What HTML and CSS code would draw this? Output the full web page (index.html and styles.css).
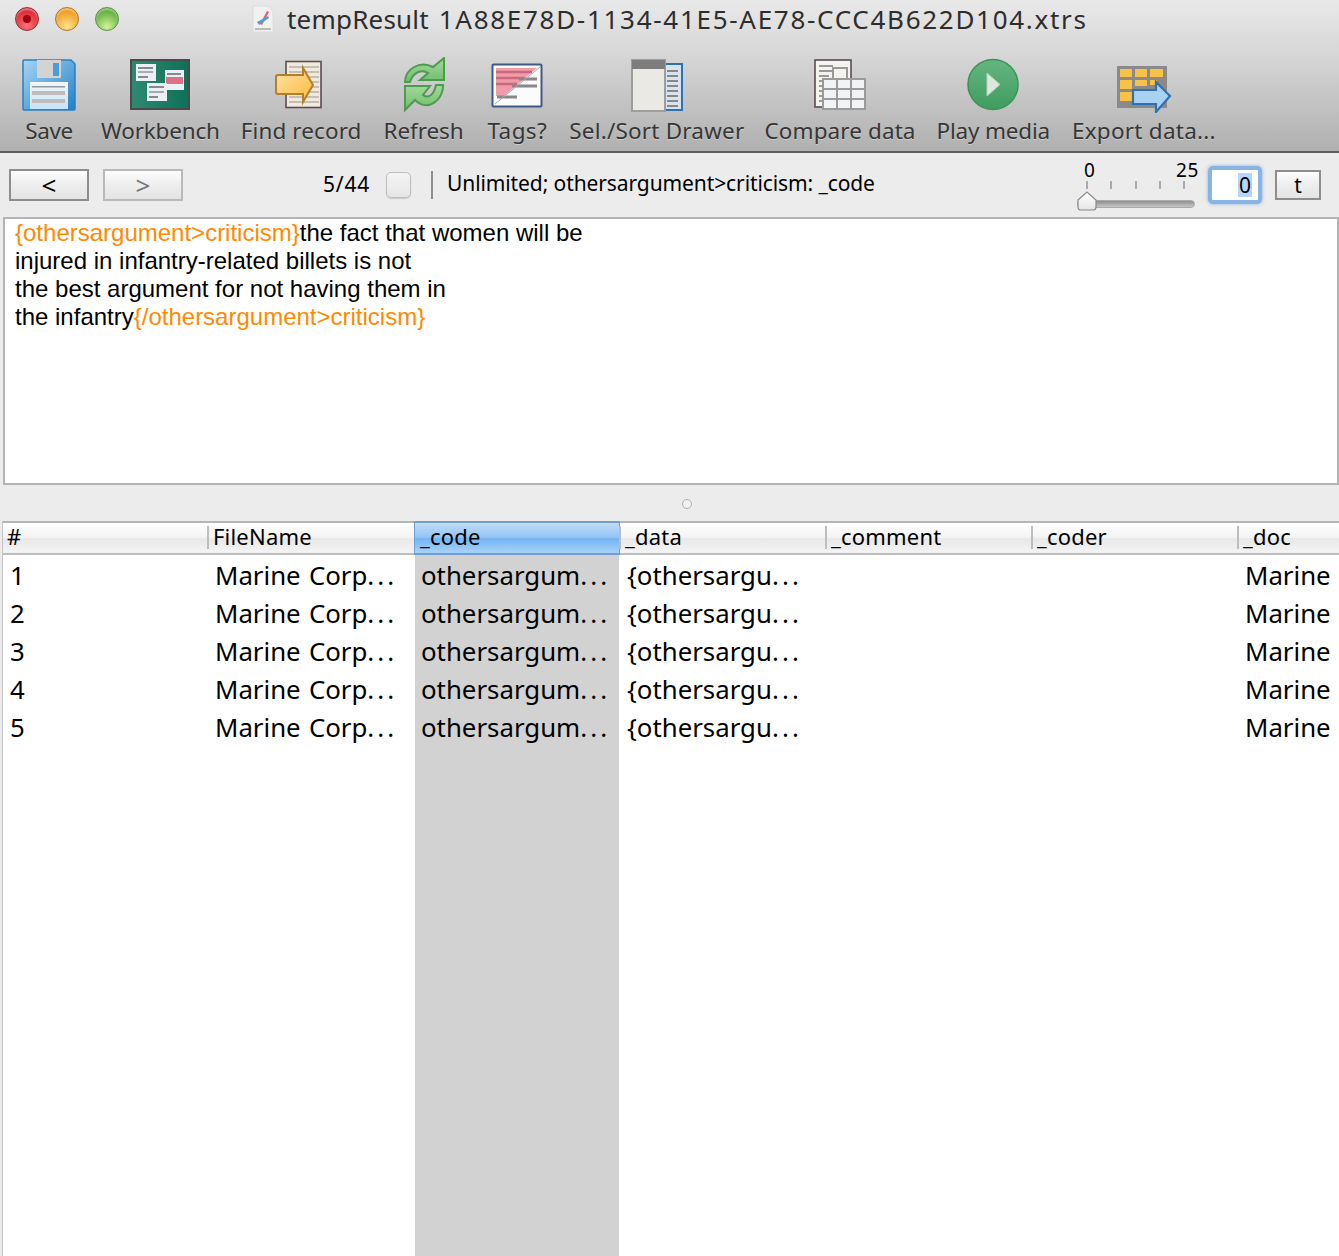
FILE: index.html
```html
<!DOCTYPE html>
<html lang="en">
<head>
<meta charset="utf-8">
<title>tempResult</title>
<link rel="stylesheet" href="styles.css">
</head>
<body>
<div class="window">
  <header class="chrome">
    <div class="titlebar">
      <div class="lights">
        <span class="light red"><i></i></span>
        <span class="light amber"></span>
        <span class="light green"></span>
      </div>
      <div class="title">
        <svg class="doc-icon" viewBox="0 0 22 28" width="22" height="28">
          <path d="M1 1h15l5 5v21H1z" fill="#f1f1f1" stroke="#dcdcdc"/>
          <path d="M8 19 15 6l2 1-7 13z" fill="#e0607a"/>
          <path d="M5 17 16 11l1 2L7 20z" fill="#5a9bd0"/>
          <rect x="3" y="23" width="16" height="2" fill="#bbb"/>
        </svg>
        <span class="title-text">tempResult <span class="title-id">1A88E78D-1134-41E5-AE78-CCC4B622D104.xtrs</span></span>
      </div>
    </div>
    <nav class="toolbar">
      <div class="tool tool-save">
        <svg class="icon" viewBox="0 0 54 56" width="54" height="56">
          <defs>
            <linearGradient id="sv" x1="0" y1="0" x2="1" y2="1"><stop offset="0" stop-color="#a8d4f2"/><stop offset="1" stop-color="#1f80ca"/></linearGradient>
            <linearGradient id="lb" x1="0" y1="0" x2="0" y2="1"><stop offset="0" stop-color="#f2f7fa"/><stop offset="1" stop-color="#c6e2f5"/></linearGradient>
            <linearGradient id="rf" x1="0" y1="0" x2="0" y2="1"><stop offset="0" stop-color="#a5d99d"/><stop offset="1" stop-color="#6fbd6c"/></linearGradient>
            <linearGradient id="ar" x1="0" y1="0" x2="1" y2="1"><stop offset="0" stop-color="#ffe3a6"/><stop offset="1" stop-color="#fbb83f"/></linearGradient>
            <linearGradient id="pl" x1="0" y1="0" x2="0" y2="1"><stop offset="0" stop-color="#66b582"/><stop offset="1" stop-color="#3f9c5f"/></linearGradient>
            <linearGradient id="wb" x1="0" y1="0" x2="1" y2="0"><stop offset="0" stop-color="#2f8a70"/><stop offset="1" stop-color="#0f6f58"/></linearGradient>
          </defs>
          <path d="M2 3h47l4 4v45a1 1 0 0 1-1 1H2a1 1 0 0 1-1-1V4a1 1 0 0 1 1-1z" fill="url(#sv)" stroke="#2b7fbf" stroke-width="1.500"/>
          <rect x="15" y="3" width="24" height="18" fill="#d3d3d3"/>
          <rect x="31" y="6" width="6" height="13" fill="#4a9ed8"/>
          <rect x="8" y="25" width="38" height="27" fill="url(#lb)"/>
          <rect x="10" y="29" width="33" height="1.500" fill="#8f9aa2"/>
          <rect x="10" y="34" width="33" height="4" fill="#bcbcbc"/>
          <rect x="10" y="42" width="33" height="4" fill="#bcbcbc"/>
        </svg>
        <span class="tool-label">Save</span>
      </div>
      <div class="tool tool-wb">
        <svg class="icon" viewBox="0 0 60 56" width="60" height="56">
          <rect x="1" y="3" width="58" height="49" fill="url(#wb)" stroke="#4a4a4a" stroke-width="2"/>
          <rect x="6" y="7" width="20" height="17" fill="#e9f1f6"/>
          <rect x="8" y="10" width="15" height="2" fill="#888"/><rect x="8" y="14" width="15" height="2" fill="#aaa"/><rect x="8" y="19" width="10" height="2" fill="#888"/>
          <rect x="35" y="13" width="19" height="20" fill="#e9f1f6"/>
          <rect x="36" y="20" width="17" height="7" fill="#e0708a"/>
          <rect x="37" y="16" width="14" height="2" fill="#888"/>
          <rect x="17" y="26" width="20" height="18" fill="#e9f1f6"/>
          <rect x="19" y="29" width="15" height="2" fill="#888"/><rect x="19" y="34" width="15" height="2" fill="#aaa"/><rect x="19" y="39" width="9" height="2" fill="#888"/>
        </svg>
        <span class="tool-label">Workbench</span>
      </div>
      <div class="tool tool-find">
        <svg class="icon" viewBox="0 0 52 56" width="52" height="56">
          <rect x="11" y="4.500" width="35" height="46" fill="#efeadd" stroke="#5b4b55" stroke-width="1.600"/>
          <path d="M14 10h30M14 15h30M14 20h30M14 25h30M14 30h30M14 35h30M14 40h30M14 45h30" stroke="#c4c0b6" stroke-width="2"/>
          <path d="M3 18H28V11L38 28 28 45V37H3Q1 37 1 35V20Q1 18 3 18Z" fill="url(#ar)" stroke="#b27f2c" stroke-width="2"/>
        </svg>
        <span class="tool-label">Find record</span>
      </div>
      <div class="tool tool-refresh">
        <svg class="icon" viewBox="0 0 44 56" width="44" height="56">
          <path d="M3 25C3 12 18 3 31 10L42 1V23H18L26 16C20 12 11 15 8 25Z" fill="url(#rf)" stroke="#4b9c4c" stroke-width="2"/>
          <path d="M3 29H28L21 38C26 42 32 38 34 28H41C42 42 26 56 13 43L3 53Z" fill="url(#rf)" stroke="#4b9c4c" stroke-width="2"/>
        </svg>
        <span class="tool-label">Refresh</span>
      </div>
      <div class="tool tool-tags">
        <svg class="icon" viewBox="0 0 52 56" width="52" height="56">
          <rect x="1.500" y="7.500" width="49" height="42" rx="1" fill="#fbfbfb" stroke="#3c5a85" stroke-width="2"/>
          <path d="M5 11h41L13 39H5z" fill="#f19aaa"/>
          <path d="M5 15h36M5 21h28M5 27h21" stroke="#c76a7c" stroke-width="2.500"/>
          <path d="M28 22h18M21 29h25" stroke="#888" stroke-width="3"/>
          <path d="M6 40h20" stroke="#888" stroke-width="3"/>
          <path d="M4 47 49 10" stroke="#aaa" stroke-width="1"/>
        </svg>
        <span class="tool-label">Tags?</span>
      </div>
      <div class="tool tool-sel">
        <svg class="icon" viewBox="0 0 56 56" width="56" height="56">
          <rect x="34" y="7" width="19" height="46" fill="#d7e4ef" stroke="#2f72b4" stroke-width="2"/>
          <path d="M38 14h11M38 19h11M38 24h11M38 29h11M38 34h11M38 39h11M38 44h11M38 49h11" stroke="#888" stroke-width="2"/>
          <rect x="3" y="3" width="33" height="51" fill="#ebe9e3" stroke="#9d9d9d" stroke-width="2"/>
          <rect x="3" y="3" width="33" height="9" fill="#7d7d7d"/>
        </svg>
        <span class="tool-label">Sel./Sort Drawer</span>
      </div>
      <div class="tool tool-compare">
        <svg class="icon" viewBox="0 0 54 56" width="54" height="56">
          <rect x="2" y="3" width="36" height="47" fill="#f5f3ee" stroke="#5b4b55" stroke-width="1.600"/>
          <path d="M6 9h14M6 14h14M6 19h10M6 24h10M6 29h8M6 34h8M6 39h8M6 44h8" stroke="#999" stroke-width="2"/>
          <rect x="20" y="11" width="14" height="14" fill="none" stroke="#999" stroke-width="2"/>
          <rect x="10" y="22" width="42" height="30" fill="#f1f3f4" stroke="#9a9a9a" stroke-width="2"/>
          <path d="M24 22v30M38 22v30M10 32h42M10 42h42" stroke="#9a9a9a" stroke-width="2"/>
        </svg>
        <span class="tool-label">Compare data</span>
      </div>
      <div class="tool tool-play">
        <svg class="icon" viewBox="0 0 52 56" width="52" height="56">
          <circle cx="26" cy="27.500" r="25" fill="url(#pl)" stroke="#3a9457" stroke-width="1.500"/>
          <path d="M20 16 33 27.500 20 39z" fill="#dfe7dd" stroke="#b8d3bc"/>
        </svg>
        <span class="tool-label">Play media</span>
      </div>
      <div class="tool tool-export">
        <svg class="icon" viewBox="0 0 56 56" width="56" height="56">
          <rect x="1" y="9" width="50" height="42" fill="#8a8a8a"/>
          <g fill="#f8c249">
            <rect x="4" y="12" width="12" height="8"/><rect x="19" y="12" width="12" height="8"/><rect x="34" y="12" width="13" height="8"/>
            <rect x="4" y="23" width="12" height="9"/><rect x="19" y="23" width="12" height="6"/><rect x="34" y="23" width="7" height="5"/>
            <rect x="4" y="35" width="12" height="9"/>
          </g>
          <path d="M17 33H40V25L54 39 40 55V47H17Z" fill="#a9d2f2" stroke="#2f72b4" stroke-width="2.200"/>
        </svg>
        <span class="tool-label">Export data...</span>
      </div>
    </nav>
  </header>

  <section class="controls">
    <button class="nav-btn">&lt;</button>
    <button class="nav-btn nav-off">&gt;</button>
    <span class="count">5/44</span>
    <span class="check"></span>
    <span class="sep"></span>
    <span class="status">Unlimited; othersargument&gt;criticism: _code</span>
    <div class="slider">
      <div class="slider-nums"><span>0</span><span>25</span></div>
      <div class="ticks"><i></i><i></i><i></i><i></i><i></i></div>
      <div class="track">
        <svg class="knob" viewBox="0 0 20 20" width="20" height="20">
          <defs><linearGradient id="kn" x1="0" y1="0" x2="0" y2="1"><stop offset="0" stop-color="#ffffff"/><stop offset="1" stop-color="#e4e4e4"/></linearGradient></defs>
          <path d="M1 9 10 1 19 9V16Q19 19 16 19H4Q1 19 1 16Z" fill="url(#kn)" stroke="#8a8a8a" stroke-width="1.200"/>
        </svg>
      </div>
    </div>
    <div class="num-field"><span class="num-sel">0</span></div>
    <button class="t-btn">t</button>
  </section>

  <section class="editor">
    <p><span class="tag">{othersargument&gt;criticism}</span>the fact that women will be</p>
    <p>injured in infantry-related billets is not</p>
    <p>the best argument for not having them in</p>
    <p>the infantry<span class="tag">{/othersargument&gt;criticism}</span></p>
  </section>

  <div class="divider"><span class="grip"></span></div>

  <section class="table">
    <div class="col">
      <div class="th th-first">#</div>
      <div class="cells cells-num"><div>1</div><div>2</div><div>3</div><div>4</div><div>5</div></div>
    </div>
    <div class="col">
      <div class="th">FileName</div>
      <div class="cells">
        <div>Marine Corp<span class="dots">...</span></div><div>Marine Corp<span class="dots">...</span></div><div>Marine Corp<span class="dots">...</span></div><div>Marine Corp<span class="dots">...</span></div><div>Marine Corp<span class="dots">...</span></div>
      </div>
    </div>
    <div class="col col-sel">
      <div class="th th-sel">_code</div>
      <div class="cells">
        <div>othersargum<span class="dots">...</span></div><div>othersargum<span class="dots">...</span></div><div>othersargum<span class="dots">...</span></div><div>othersargum<span class="dots">...</span></div><div>othersargum<span class="dots">...</span></div>
      </div>
    </div>
    <div class="col">
      <div class="th">_data</div>
      <div class="cells">
        <div>{othersargu<span class="dots">...</span></div><div>{othersargu<span class="dots">...</span></div><div>{othersargu<span class="dots">...</span></div><div>{othersargu<span class="dots">...</span></div><div>{othersargu<span class="dots">...</span></div>
      </div>
    </div>
    <div class="col">
      <div class="th">_comment</div>
      <div class="cells"></div>
    </div>
    <div class="col">
      <div class="th">_coder</div>
      <div class="cells"></div>
    </div>
    <div class="col col-last">
      <div class="th">_doc</div>
      <div class="cells"><div>Marine</div><div>Marine</div><div>Marine</div><div>Marine</div><div>Marine</div></div>
    </div>
  </section>
</div>
</body>
</html>
```
FILE: styles.css
```css
* { box-sizing: border-box; }
html, body { margin: 0; padding: 0; background: #ececec; }
body { font-family: "Noto Sans", "DejaVu Sans", sans-serif; color: #000; }
.window { width: 1339px; height: 1256px; overflow: hidden; display: flex; flex-direction: column; }

.chrome { height: 153px; flex: none; background: linear-gradient(#e9e9e9, #d4d4d4 40%, #b0b0b0); border-bottom: 2px solid #5f5f5f; }
.titlebar { height: 38px; display: flex; align-items: center; position: relative; }
.lights { display: flex; gap: 16px; padding-left: 15px; }
.light { width: 24px; height: 24px; border-radius: 50%; display: flex; align-items: center; justify-content: center; box-shadow: inset 0 2px 2px rgba(255,255,255,.4); }
.light i { width: 8px; height: 8px; border-radius: 50%; background: #a00010; display: block; }
.red { background: radial-gradient(circle at 50% 80%, #ff7478, #dc2a36 70%); border: 1px solid #8d3038; }
.amber { background: radial-gradient(circle at 50% 85%, #ffe28c, #f09c22 72%); border: 1px solid #a8792a; }
.green { background: radial-gradient(circle at 50% 85%, #d2f39a, #62ae40 72%); border: 1px solid #5d8f45; }
.title { position: absolute; left: 252px; top: 4px; display: flex; align-items: center; gap: 13px; }
.doc-icon { display: block; }
.title-text { font-size: 26px; line-height: 30px; color: #2d2d2d; white-space: nowrap; letter-spacing: .2px; }
.title-id { letter-spacing: 1.71px; margin-left: 3px; }

.toolbar { display: flex; padding: 19px 0 0 22px; gap: 21px; }
.tool { display: flex; flex-direction: column; align-items: center; }
.tool-save { margin-right: 4px; }
.tool-save .tool-label { letter-spacing: -.4px; }
.tool-wb .tool-label { letter-spacing: -.2px; }
.tool-find .tool-label { letter-spacing: .1px; }
.tool-refresh { margin-left: 1px; }
.tool-refresh .tool-label { letter-spacing: -.1px; }
.tool-tags { margin-left: 3px; }
.tool-tags .tool-label { letter-spacing: .4px; }
.tool-sel { margin-left: 1px; }
.tool-sel .tool-label { letter-spacing: .2px; }
.tool-compare { margin-left: -1px; }
.tool-compare .tool-label { letter-spacing: .1px; }
.tool-play .tool-label { letter-spacing: -.2px; }
.tool-export { margin-left: 1px; }
.tool-export .tool-label { letter-spacing: .25px; }
.icon { display: block; filter: blur(.5px); height: 56px; }
.tool-label { font-size: 22.5px; line-height: 30px; margin-top: 3px; color: #363636; white-space: nowrap; text-shadow: 0 1px 0 rgba(255,255,255,.35); }

.controls { height: 64px; flex: none; display: flex; align-items: center; padding: 0 18px 0 9px; background: #ececec; }
.nav-btn, .t-btn { font: inherit; background: linear-gradient(#fdfdfd, #ededed 50%, #e4e4e4); padding: 0; color: #000; }
.nav-btn { width: 80px; height: 32px; border: 2px solid #8d8d8d; font-size: 26px; line-height: 26px; margin-right: 14px; }
.nav-off { border-color: #b9b9b9; color: #777; margin-right: 0; }
.count { font-size: 21px; margin-left: 140px; width: 63px; letter-spacing: .8px; margin-top: -2px; }
.check { width: 25px; height: 26px; border-radius: 5px; border: 1px solid #bdbdbd; background: linear-gradient(#f4f4f4, #e6e6e6); box-shadow: 0 1px 1px #ccc; margin-right: 20px; }
.sep { width: 2px; height: 28px; background: #8f8f8f; margin-right: 14px; }
.status { font-size: 21px; flex: 1; white-space: nowrap; margin-top: -5px; letter-spacing: -.1px; }
.slider { width: 120px; margin-right: 12px; display: flex; flex-direction: column; margin-top: 4px; }
.slider-nums { display: flex; justify-content: space-between; font-size: 19px; line-height: 18px; padding: 0 0 0 7px; letter-spacing: .6px; margin: -6px -2px 0 0; }
.ticks { display: flex; justify-content: space-between; padding: 0 12px 0 9px; height: 9px; margin-top: 2px; }
.ticks i { display: block; width: 2px; height: 8px; background: #aaa; }
.track { height: 8px; margin: 10px 2px 0 0; background: linear-gradient(#8f8f8f, #c6c6c6); border-radius: 4px; border: 1px solid #aaa; position: relative; }
.knob { position: absolute; left: -1px; top: -10px; display: block; }
.num-field { width: 50px; height: 34px; border: 2px solid #8bb4e2; border-radius: 3px; background: #fff; box-shadow: 0 0 0 2px #86b3e4, 0 0 3px 3px rgba(120,170,225,.5); display: flex; align-items: center; justify-content: flex-end; padding-right: 6px; margin: 0 15px 0 1px; font-size: 21px; }
.num-sel { background: #b5d5ff; line-height: 24px; padding: 0 1px; }
.t-btn { width: 46px; height: 30px; border: 2px solid #8d8d8d; font-size: 21px; line-height: 24px; }

.editor { height: 268px; flex: none; margin-left: 3px; background: #fff; border: 2px solid #b4b4b4; padding: 0 0 0 10px; font-family: "Liberation Sans", Arial, sans-serif; font-size: 24px; line-height: 28px; }
.editor p { margin: 0; }
.tag { color: #ff8a00; }

.divider { height: 36px; flex: none; display: flex; justify-content: center; align-items: center; padding: 2px 0 0 35px; }
.grip { width: 10px; height: 10px; border-radius: 50%; background: #f2f2f2; border: 1px solid #b0b0b0; }

.table { flex: 1; margin-left: 2px; background: #fff; display: grid; grid-template-columns: 205px 206px 206px 206px 206px 206px 1fr; border-left: 1px solid #c4c4c4; overflow: hidden; }
.col { display: flex; flex-direction: column; min-width: 0; }
.th { height: 34px; flex: none; font-size: 22px; line-height: 27px; padding-left: 5px; letter-spacing: .2px; background: linear-gradient(#fff, #f3f3f3 50%, #e8e8e8 52%, #f4f4f4); border-top: 2px solid #b5b5b5; border-bottom: 2px solid #bdbdbd; white-space: nowrap; position: relative; }
.th::before { content: ""; position: absolute; left: -1px; top: 3px; bottom: 4px; width: 2px; background: #bdbdbd; }
.th-first { padding-left: 4px; }
.th-first::before { display: none; }
.th-sel { background: linear-gradient(#c4dcf7, #8fc3f5 50%, #74b4f3 52%, #a8d3f9); border: 1px solid #6e9ed2; border-top-width: 2px; border-bottom-width: 2px; }
.th-sel::before { display: none; }
.cells { flex: 1; padding: 1px 0 0 7px; font-size: 25.8px; line-height: 38px; word-spacing: 1.5px; white-space: nowrap; overflow: hidden; }
.dots { letter-spacing: 3.1px; }
.col-sel .cells { background: #d2d2d2; margin: 0 1px; padding-left: 6px; }
.col-last .cells { padding-left: 7px; }
```
